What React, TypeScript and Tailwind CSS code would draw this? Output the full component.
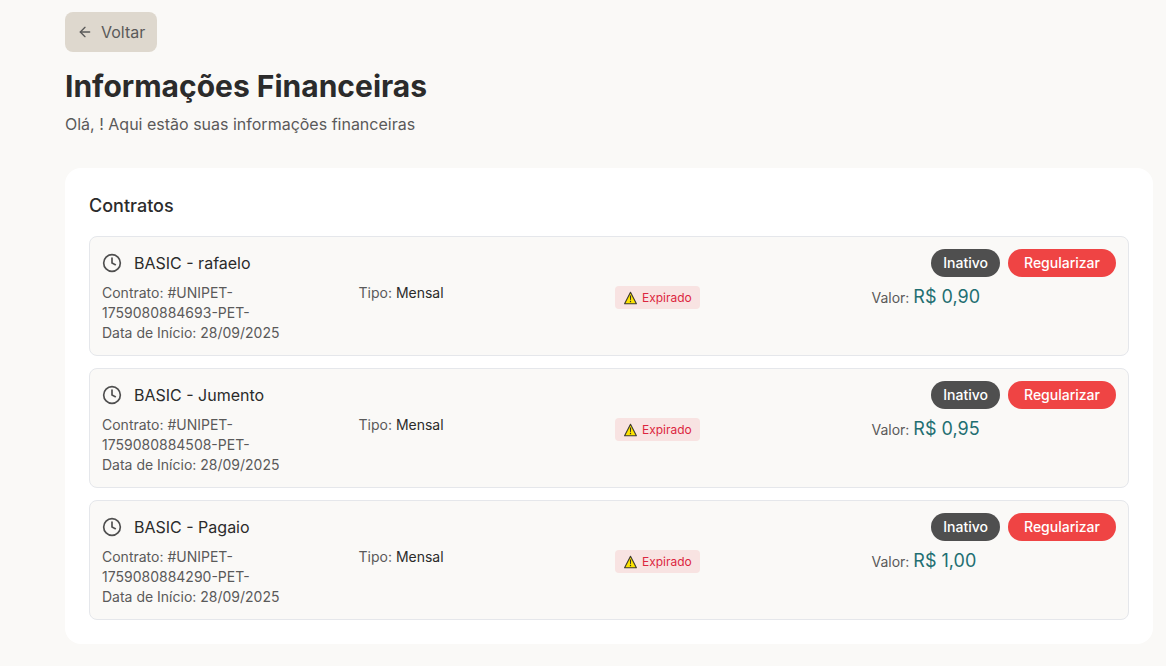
import { ArrowLeft, Clock } from "lucide-react";

type Contract = {
  name: string;
  code: string;
  start: string;
  kind: string;
  value: string;
};

const contracts: Contract[] = [
  { name: "BASIC - rafaelo", code: "#UNIPET-1759080884693-PET-", start: "28/09/2025", kind: "Mensal", value: "R$ 0,90" },
  { name: "BASIC - Jumento", code: "#UNIPET-1759080884508-PET-", start: "28/09/2025", kind: "Mensal", value: "R$ 0,95" },
  { name: "BASIC - Pagaio", code: "#UNIPET-1759080884290-PET-", start: "28/09/2025", kind: "Mensal", value: "R$ 1,00" },
];

function WarningIcon() {
  return (
    <svg className="mr-1 inline-block align-[-3px]" width="15" height="14" viewBox="0 0 15 14" aria-hidden="true">
      <path d="M7.5 1.2 L13.4 12.8 H1.6 Z" fill="#fde300" stroke="#3d3a2c" strokeWidth="1.1" strokeLinejoin="round" />
      <path d="M6.9 4.6h1.2l-.2 4.6h-.8z" fill="#33312a" />
      <rect x="6.9" y="10" width="1.2" height="1.2" fill="#33312a" />
    </svg>
  );
}

function ContractCard({ contract }: { contract: Contract }) {
  return (
    <li className="rounded-lg border border-gray-200 bg-[#faf9f7] p-3">
      <div className="flex items-center justify-between">
        <div className="flex items-center gap-3">
          <Clock size={20} strokeWidth={2} className="text-[#4f4f4f]" aria-hidden="true" />
          <h3 className="text-base font-normal text-[#2b2b2b]">{contract.name}</h3>
        </div>
        <div className="flex items-center gap-2">
          <span className="rounded-full bg-[#4f4f4f] px-3 py-1 text-sm font-medium text-white">Inativo</span>
          <button type="button" className="rounded-full bg-[#ef4444] px-4 py-1 text-sm font-medium text-white">
            Regularizar
          </button>
        </div>
      </div>
      <div className="mt-1.5 grid grid-cols-4 gap-3 text-sm font-normal text-[#5a5a5a]">
        <div>
          <p>Contrato: {contract.code}</p>
          <p>Data de Início: {contract.start}</p>
        </div>
        <p>
          Tipo: <span className="text-[#2b2b2b]">{contract.kind}</span>
        </p>
        <p className="leading-7">
          <span className="rounded bg-[#f8e3e2] px-2 py-1 text-xs leading-7 text-[#dc2640]">
            <WarningIcon />
            Expirado
          </span>
        </p>
        <p>
          Valor: <span className="text-lg text-[#1f6f72]">{contract.value}</span>
        </p>
      </div>
    </li>
  );
}

export default function App() {
  return (
    <main className="min-h-screen bg-[#faf9f7] pt-3 pr-[13px] pb-5 pl-[65px] font-['Inter',sans-serif] text-[#2b2b2b]">
      <button type="button" className="flex items-center gap-2 rounded-lg bg-[#ded8ce] px-3 py-2 text-base font-normal text-[#5a5a5a]">
        <ArrowLeft size={16} strokeWidth={2} aria-hidden="true" />
        Voltar
      </button>
      <header className="mt-4 mb-8">
        <h1 className="mb-2 text-3xl font-bold">Informações Financeiras</h1>
        <p className="text-base font-normal text-[#5a5a5a]">Olá, ! Aqui estão suas informações financeiras</p>
      </header>
      <section className="rounded-2xl bg-white p-6">
        <h2 className="mb-4 text-lg font-medium">Contratos</h2>
        <ul className="flex flex-col gap-3">
          {contracts.map((contract) => (
            <ContractCard key={contract.code} contract={contract} />
          ))}
        </ul>
      </section>
    </main>
  );
}
